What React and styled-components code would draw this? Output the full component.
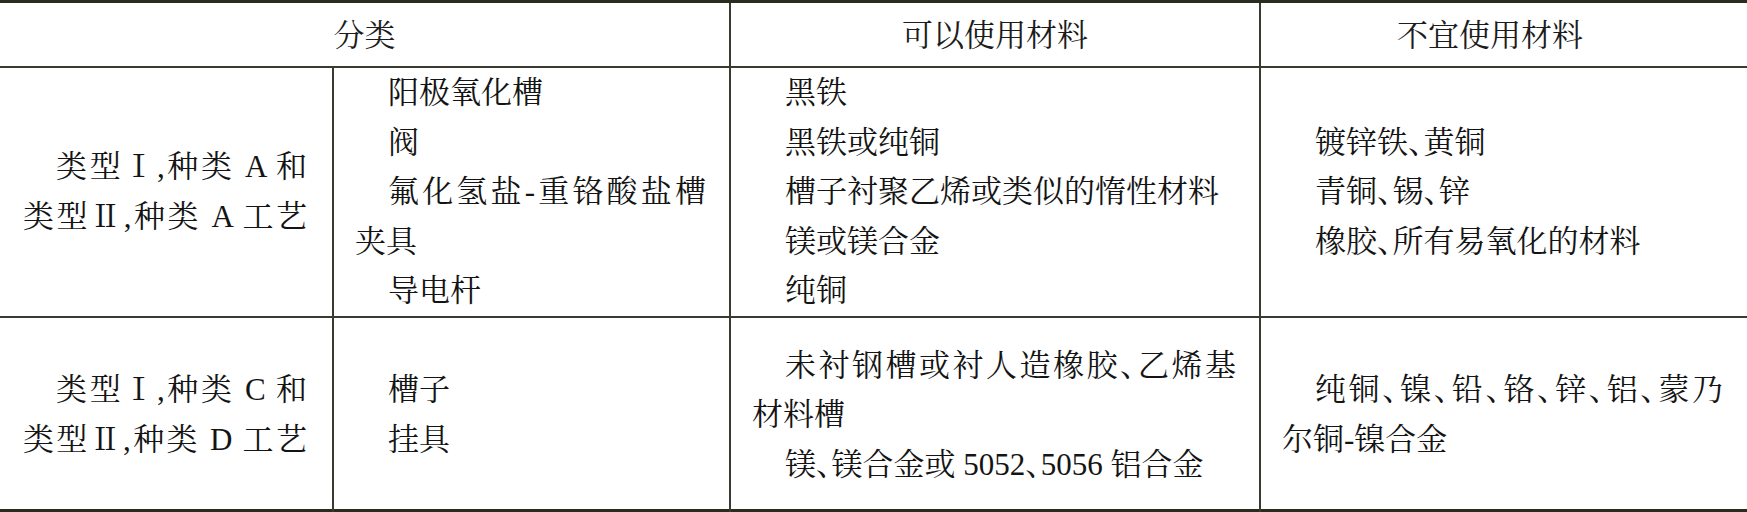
import React from "react";
import styled, { createGlobalStyle } from "styled-components";

const Global = createGlobalStyle`
  html, body { margin: 0; padding: 0; background: #ffffff; }
  body {
    font-family: "Liberation Serif", "Noto Serif CJK SC", "Noto Sans CJK SC", serif;
    color: #141414;
  }
`;

const Table = styled.div`
  display: grid;
  grid-template-columns: 332px 397px 530px 488px;
  grid-template-rows: 65px 250px 194px;
  width: 1747px;
  height: 512px;
  box-sizing: border-box;
  border-top: 3px solid #2c2c1e;
  border-bottom: 3px solid #2c2c1e;
  font-size: 31px;
  font-feature-settings: "halt";
`;

const HeadCell = styled.div`
  grid-column: ${(p) => p.$span || "auto"};
  display: flex;
  align-items: center;
  justify-content: center;
  box-sizing: border-box;
  padding: 2px ${(p) => p.$padRight || 0}px 0 0;
  border-bottom: 2px solid #3a3a30;
  border-left: ${(p) => (p.$first ? "none" : "2px solid #3a3a30")};
  line-height: 1;
  color: #1c1c1c;
`;

const Cell = styled.div`
  display: flex;
  flex-direction: column;
  justify-content: center;
  box-sizing: border-box;
  padding: 0 ${(p) => p.$padRight ?? 23}px 0 ${(p) => (p.$first ? 23 : 21)}px;
  border-left: ${(p) => (p.$first ? "none" : "2px solid #3a3a30")};
  border-bottom: ${(p) => (p.$last ? "none" : "2px solid #3a3a30")};
`;

const Line = styled.div`
  line-height: 49.6px;
  white-space: nowrap;
  text-indent: ${(p) => (p.$indent ? "33px" : "0")};
  text-align: ${(p) => (p.$justify ? "justify" : "left")};
  text-align-last: ${(p) => (p.$justify ? "justify" : "auto")};
  ${(p) => (p.$justify ? "white-space: normal;" : "")}
`;

const rows = [
  {
    cat: [
      { t: "类型Ⅰ,种类 A 和", i: true, j: true },
      { t: "类型Ⅱ,种类 A 工艺", j: true },
    ],
    part: [
      { t: "阳极氧化槽", i: true },
      { t: "阀", i: true },
      { t: "氟化氢盐-重铬酸盐槽", i: true, j: true },
      { t: "夹具" },
      { t: "导电杆", i: true },
    ],
    ok: [
      { t: "黑铁", i: true },
      { t: "黑铁或纯铜", i: true },
      { t: "槽子衬聚乙烯或类似的惰性材料", i: true },
      { t: "镁或镁合金", i: true },
      { t: "纯铜", i: true },
    ],
    no: [
      { t: "镀锌铁、黄铜", i: true },
      { t: "青铜、锡、锌", i: true },
      { t: "橡胶、所有易氧化的材料", i: true },
    ],
  },
  {
    cat: [
      { t: "类型Ⅰ,种类 C 和", i: true, j: true },
      { t: "类型Ⅱ,种类 D 工艺", j: true },
    ],
    part: [
      { t: "槽子", i: true },
      { t: "挂具", i: true },
    ],
    ok: [
      { t: "未衬钢槽或衬人造橡胶、乙烯基", i: true, j: true },
      { t: "材料槽" },
      { t: "镁、镁合金或 5052、5056 铝合金", i: true },
    ],
    no: [
      { t: "纯铜、镍、铅、铬、锌、铝、蒙乃", i: true, j: true },
      { t: "尔铜-镍合金" },
    ],
  },
];

const Lines = ({ items }) =>
  items.map((l, k) => (
    <Line key={k} $indent={l.i} $justify={l.j}>
      {l.t}
    </Line>
  ));

export default function App() {
  return (
    <>
      <Global />
      <Table>
        <HeadCell $span="1 / 3" $first>
          分类
        </HeadCell>
        <HeadCell>可以使用材料</HeadCell>
        <HeadCell $padRight={28}>不宜使用材料</HeadCell>
        {rows.map((r, idx) => {
          const last = idx === rows.length - 1;
          return (
            <React.Fragment key={idx}>
              <Cell $first $last={last} $padRight={25}>
                <Lines items={r.cat} />
              </Cell>
              <Cell $last={last}>
                <Lines items={r.part} />
              </Cell>
              <Cell $last={last}>
                <Lines items={r.ok} />
              </Cell>
              <Cell $last={last} $padRight={24}>
                <Lines items={r.no} />
              </Cell>
            </React.Fragment>
          );
        })}
      </Table>
    </>
  );
}
